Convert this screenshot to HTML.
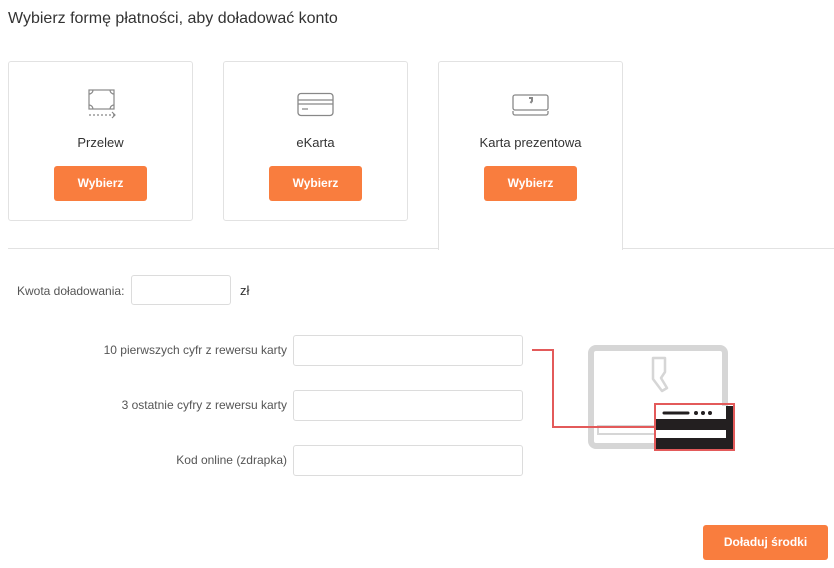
<!DOCTYPE html>
<html><head><meta charset="utf-8"><style>
body{margin:0;width:834px;height:568px;background:#fff;font-family:"Liberation Sans",sans-serif;color:#333;position:relative;overflow:hidden}
.a{position:absolute}
.card{position:absolute;top:61px;width:183px;height:158px;border:1px solid #e2e2e2;border-radius:3px;background:#fff}
.card .t{position:absolute;top:73px;width:100%;text-align:center;font-size:13px;color:#333}
.btn{position:absolute;background:#f97d3e;color:#fff;font-weight:bold;font-size:12px;text-align:center;border-radius:3px}
.card .btn{left:45px;top:104px;width:93px;height:35px;line-height:35px}
.inp{position:absolute;border:1px solid #dcdcdc;border-radius:3px;background:#fff}
.lbl{position:absolute;font-size:12px;color:#555;text-align:right}
</style></head><body>
<div class="a" style="left:8px;top:10px;font-size:16px;color:#333">Wybierz formę płatności, aby doładować konto</div>
<div class="a" style="left:8px;top:248px;width:431px;height:1px;background:#e2e2e2"></div>
<div class="a" style="left:623px;top:248px;width:211px;height:1px;background:#e2e2e2"></div>
<div class="card" style="left:8px">
<svg class="a" style="left:76px;top:26px" width="34" height="34" viewBox="0 0 34 34" fill="none" stroke="#888" stroke-width="1.2"><rect x="4" y="2" width="25" height="19"/><path d="M4 6a4 4 0 0 0 4-4M29 6a4 4 0 0 1-4-4M4 17a4 4 0 0 1 4 4M29 17a4 4 0 0 0-4 4"/><path d="M4 27h26" stroke-dasharray="2 2"/><path d="M27 24l3 3-3 3"/></svg>
<div class="t">Przelew</div><div class="btn">Wybierz</div></div>
<div class="card" style="left:223px">
<svg class="a" style="left:73px;top:30px" width="37" height="26" viewBox="0 0 37 26" fill="none" stroke="#888" stroke-width="1.3"><rect x="1" y="1.5" width="35" height="22" rx="3"/><path d="M1 8h35M1 12h35M5 17h6"/></svg>
<div class="t">eKarta</div><div class="btn">Wybierz</div></div>
<div class="card" style="left:438px;height:188px;border-bottom:none;border-radius:3px 3px 0 0">
<svg class="a" style="left:73px;top:30px" width="38" height="26" viewBox="0 0 38 26" fill="none" stroke="#888" stroke-width="1.3"><rect x="1" y="3" width="35" height="15" rx="2"/><path d="M1 19v2a2 2 0 0 0 2 2h31a2 2 0 0 0 2-2v-2"/><path d="M17 6h3v3l-1.5 2" stroke-width="2"/></svg>
<div class="t" style="top:73px">Karta prezentowa</div><div class="btn">Wybierz</div></div>
<div class="lbl" style="left:17px;top:284px">Kwota doładowania:</div>
<div class="inp" style="left:131px;top:275px;width:98px;height:28px"></div>
<div class="a" style="left:240px;top:283px;font-size:13px">zł</div>
<div class="lbl" style="left:60px;width:227px;top:343px">10 pierwszych cyfr z rewersu karty</div>
<div class="inp" style="left:293px;top:335px;width:228px;height:29px"></div>
<div class="lbl" style="left:60px;width:227px;top:398px">3 ostatnie cyfry z rewersu karty</div>
<div class="inp" style="left:293px;top:390px;width:228px;height:29px"></div>
<div class="lbl" style="left:60px;width:227px;top:453px">Kod online (zdrapka)</div>
<div class="inp" style="left:293px;top:445px;width:228px;height:29px"></div>
<svg class="a" style="left:525px;top:340px" width="215" height="115" viewBox="0 0 215 115">
<rect x="66" y="8" width="134" height="98" rx="5" fill="none" stroke="#d6d6d6" stroke-width="6"/>
<rect x="73" y="86" width="120" height="8" fill="none" stroke="#d6d6d6" stroke-width="2"/>
<path d="M128 18h12v14l-4 6 6 10 -5 3 -9-12z" fill="none" stroke="#d6d6d6" stroke-width="2.5" stroke-linejoin="round"/>
<rect x="131" y="66" width="77" height="43" fill="#231f20"/>
<rect x="131" y="66" width="70" height="13" fill="#fff"/>
<rect x="131" y="90" width="70" height="8" fill="#fff"/>
<path d="M139 73h24" stroke="#231f20" stroke-width="3" stroke-linecap="round"/>
<circle cx="171" cy="73" r="2" fill="#231f20"/><circle cx="178" cy="73" r="2" fill="#231f20"/><circle cx="185" cy="73" r="2" fill="#231f20"/>
<rect x="130" y="64" width="79" height="46" fill="none" stroke="#e35a5a" stroke-width="2"/>
<path d="M7 10h21v77h102" fill="none" stroke="#e35a5a" stroke-width="2"/>
</svg>
<div class="btn" style="left:703px;top:525px;width:125px;height:35px;line-height:35px">Doładuj środki</div>
</body></html>
